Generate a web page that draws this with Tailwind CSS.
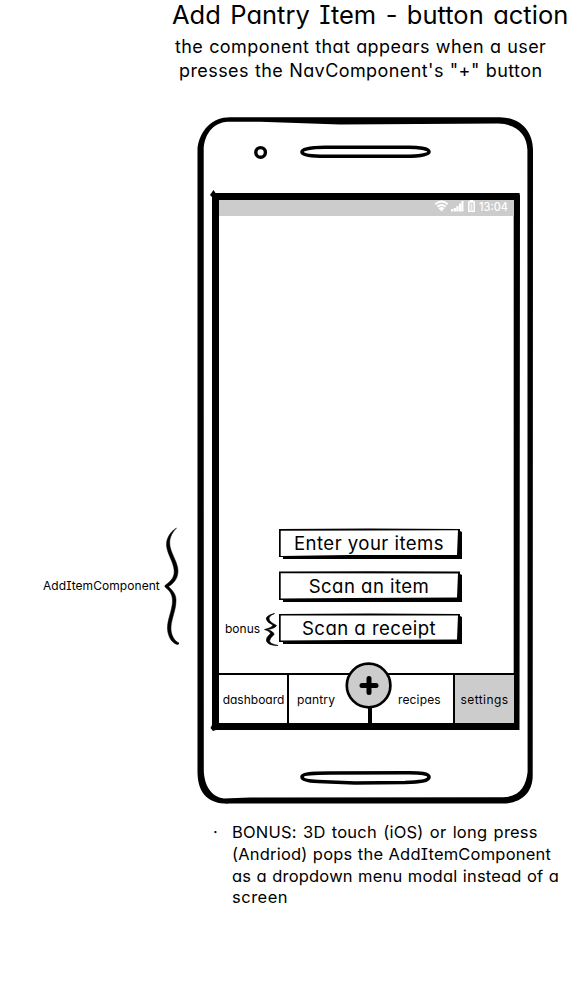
<!DOCTYPE html>
<html lang="en">
<head>
<meta charset="utf-8">
<title>Add Pantry Item</title>
<script src="https://cdn.jsdelivr.net/npm/@tailwindcss/browser@4"></script>
</head>
<body class="bg-white text-black">
<div class="w-[569px] h-[989px] overflow-hidden flex flex-col font-[Inter,sans-serif] [font-feature-settings:'cv11','cv08'] whitespace-nowrap">
  <header class="h-[117px] shrink-0 pl-[172px]">
    <h1 class="h-[35px] leading-[29px] text-[25.5px] [word-spacing:2.3px]">Add Pantry Item - button action</h1>
    <p class="h-6 leading-6 text-[18px] pl-[3px] tracking-[0.42px] [word-spacing:0.4px]">the component that appears when a user</p>
    <p class="h-6 leading-6 text-[18px] pl-[7px] tracking-[0.42px] [word-spacing:0.5px]">presses the NavComponent's "+" button</p>
  </header>

  <main class="h-[687px] shrink-0 flex">
    <aside class="w-[197px] shrink-0 pt-[410px] flex items-start">
      <div class="w-[163px] h-[118px] pl-[43px] flex items-center text-[12px] tracking-[0.06px]">AddItemComponent</div>
      <svg class="w-4 h-[118px]" viewBox="163 527 16 118"><path stroke="#000" stroke-width=".5" d="M176.500 528C170 532 165.500 539 166.700 547C168 556 175.500 565 174 574C173 580 168 583 165 585.500C164.500 586 165 587 165.500 587.500C169 590 172.500 594 172.500 601C172.500 610 167 620 167.500 629C168 637 172 643 177 644.500Q180 644 179 643C174 641 170.500 634 171 627C171.500 618 176.500 609 176 599C175.500 593 171 589 168.500 586.500C173 584 178 579 178 571C178 562 169.700 552 169.700 543C169.700 537 172.500 532 176.500 528Z"/></svg>
    </aside>

    <section class="relative w-[336px] h-[687px] shrink-0">
      <svg class="absolute inset-0 w-[336px] h-[687px]" viewBox="197 117 336 687">
        <path fill-rule="evenodd" d="M197.500 148C200 130 212 117.300 230 117.200L500 117.200C520 117.500 533 131 533 150L532.700 777C532 794 520 803.600 502 803.600L230 803.600C210 804.500 198 795 197.500 773ZM203.700 150C204 136 212 122.500 228 121.800L260 121.800L340 124.500L498 123.600C516 124 527 134 527.400 150L527.600 772C526 786 520 797 503 797.200L250 797.600L224 798.400C211 797 204 785 203.800 770Z"/>
        <path fill-rule="evenodd" d="M211 193.500L213.500 190L215.500 193H519.500L520 196L519.500 730H216L213 731L210.500 728L212 725V197L210 195ZM219 200V723H513.700V200Z"/>
        <circle cx="260.600" cy="152.400" r="4.800" fill="none" stroke="#000" stroke-width="3.400"/>
        <path fill="none" stroke="#000" stroke-width="3.600" d="M325 147.300H405C419 147 429 148.500 429 151.700C429 155 418 156.200 405 156.200H320C307 156 302 154.500 302 152C302 149 311 147.300 325 147.300Z"/>
        <path fill="none" stroke="#000" stroke-width="3.600" d="M330 773L405 772.800C421 772.500 429 773.700 429 777C429 781 420 782 405 782.500L355 783L318 781.500C306 781 302 779.500 302 777C302 774 308 773.200 330 773Z"/>
      </svg>

      <div class="relative ml-[22px] pt-[83px] w-[295px] h-[606px] flex flex-col">
        <div class="h-4 shrink-0 bg-[#ccc] text-white flex items-center">
          <svg class="ml-[215px] w-[80px] h-4" viewBox="434 200 80 16">
            <g fill="none" stroke="#fff" stroke-width="1.900"><path d="M435.300 204.300Q441.500 198.900 447.700 204.300"/><path d="M437.300 206.800Q441.500 203.100 445.700 206.800"/><path d="M439.200 208.900Q441.500 207 443.800 208.900"/></g>
            <circle cx="441.500" cy="210" r="1.200" fill="#fff"/>
            <path fill="#fff" d="M451 209h2.300v2.500H451zM453.700 208H456v3.500h-2.300zM456.300 206h2.300v5.500h-2.300zM459 203.500h2.300v8H459zM461.500 201h2v10.500h-2z"/>
            <path fill="none" stroke="#fff" stroke-width="1.500" d="M468.800 202h5.400v9.200h-5.400z"/><path fill="#fff" fill-opacity=".75" d="M470.600 203.500h1.800v6.500h-1.800z"/><path fill="#fff" d="M469.800 200h3.400v1.500h-3.400z"/>
            <text x="479" y="210.700" font-size="11.500" font-weight="500" fill="#fff" textLength="29" lengthAdjust="spacingAndGlyphs">13:04</text>
          </svg>
        </div>

        <div class="flex-1 pt-[312px] flex">
          <div class="w-[60px] shrink-0 flex items-end h-[117px]">
            <div class="h-8 pl-[6px] w-[46px] flex items-center text-[12px]">bonus</div>
            <svg class="w-[15px] h-8 overflow-visible" viewBox="265 613 15 32"><path stroke="#000" stroke-width=".7" d="M275.500 613.500Q267 615.500 267.300 619Q268 622.500 274 625Q273.500 627.500 265.500 629.500Q271 631 271.500 633.500Q266.500 638 267.500 641Q269 645.500 279 645.500Q271 644 270.500 641Q270.500 638.500 275 634.500Q275 631.500 268 629.500Q276 628.500 277.500 625.500Q270.500 622 270 619Q269.500 616 275.500 613.500Z"/></svg>
          </div>
          <div class="w-[184px] h-[118px] flex flex-col gap-[11.5px] text-[18.6px] tracking-[0.45px] [word-spacing:1.6px]">
            <button class="relative w-[183px] h-[31px] shrink-0 flex justify-center items-center pt-px pr-[3px]"><svg class="absolute inset-0 w-[183px] h-[31px]" viewBox="0 0 183 31"><path d="M0 1Q90 0 181 1V3L183 4V31H4V29H0Z"/><path fill="#fff" d="M1.700 2.800L179 2.300L178 27L70 27L1.700 28Z"/></svg><span class="relative">Enter your items</span></button>
            <button class="relative w-[183px] h-[31px] shrink-0 flex justify-center items-center pt-px pr-[3px]"><svg class="absolute inset-0 w-[183px] h-[31px]" viewBox="0 0 183 31"><path d="M0 .5Q90 0 181 .5V3L183 4V31H4V29H0Z"/><path fill="#fff" d="M1.700 2.300L179 2.600L178 26.500L70 27L1.700 27.500Z"/></svg><span class="relative">Scan an item</span></button>
            <button class="relative w-[183px] h-[31px] shrink-0 flex justify-center items-center pt-px pr-[3px]"><svg class="absolute inset-0 w-[183px] h-[31px]" viewBox="0 0 183 31"><path d="M0 1Q90 0 181 1V3L183 4V31H4V29H0Z"/><path fill="#fff" d="M1.700 2.600L179 2.600L178 26.500L70 27L1.700 27.500Z"/></svg><span class="relative">Scan a receipt</span></button>
          </div>
        </div>

        <nav class="relative h-[50px] shrink-0 flex border-t-2 border-black text-[12px]">
          <a class="w-[70px] border-r-2 border-black flex justify-center items-center pt-[2px] pl-px">dashboard</a>
          <a class="w-[83px] border-r-[4px] border-black flex items-center pl-2 pt-[2px] tracking-[0.15px]">pantry</a>
          <a class="w-[83px] border-r-2 border-black flex items-center pl-[26px] pt-[2px] tracking-[0.15px]">recipes</a>
          <a class="w-[59px] bg-[#ccc] flex justify-center items-center pt-[2px] tracking-[0.4px]">settings</a>
          <svg class="absolute left-[126px] -top-[13px] w-[47px] h-[47px]" viewBox="345 662 47 47"><circle cx="368.600" cy="685.500" r="21.800" fill="#ccc" stroke="#000" stroke-width="2.700"/><path stroke="#000" stroke-width="5" stroke-linecap="round" d="M362 685.500h14M369 678.500v14"/></svg>
        </nav>
      </div>
    </section>
  </main>

  <footer class="pt-[17.7px] pl-[213px] text-[16.5px] leading-[21.9px] flex">
    <span class="w-[19px]">·</span>
    <div class="flex flex-col items-start tracking-[0.2px]">
      <span class="[word-spacing:1.5px]">BONUS: 3D touch (iOS) or long press</span>
      <span class="[word-spacing:0.5px]">(Andriod) pops the AddItemComponent</span>
      <span class="[word-spacing:0.5px]">as a dropdown menu modal instead of a</span>
      <span class="tracking-[0.5px]">screen</span>
    </div>
  </footer>
</div>
</body>
</html>
